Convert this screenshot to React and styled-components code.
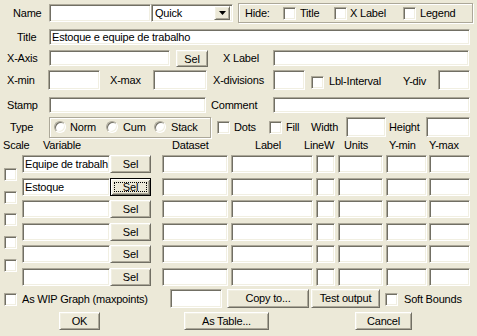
import React from 'react';
import styled, { createGlobalStyle, css } from 'styled-components';

const GlobalStyle = createGlobalStyle`
    html, body {
        margin: 0;
        padding: 0;
        background: #ece9d8;
    }
    body {
        font-family: "Liberation Sans", Arial, sans-serif;
        font-size: 11px;
        letter-spacing: -0.2px;
        color: #000;
    }
`;

const sunken = css`
    box-sizing: border-box;
    border: 1px solid;
    border-color: #aca899 #ffffff #ffffff #aca899;
    box-shadow: inset 1px 1px 0 #716f64, inset -1px -1px 0 #f1efe2;
    background: #fff;
`;

const raised = css`
    box-sizing: border-box;
    border: 1px solid;
    border-color: #ffffff #716f64 #716f64 #ffffff;
    box-shadow: inset 1px 1px 0 #f1efe2, inset -1px -1px 0 #aca899;
    background: #ece9d8;
`;

const Dialog = styled.div`
    width: 477px;
    height: 336px;
    display: flex;
    flex-direction: column;
    overflow: hidden;
`;

const Row = styled.div`
    display: flex;
    align-items: ${({ $align }) => $align || 'center'};
    height: ${({ $h }) => $h}px;
    margin-top: ${({ $mt }) => $mt}px;
    flex-shrink: 0;
`;

const Label = styled.span`
    flex-shrink: 0;
    width: ${({ $w }) => ($w ? `${$w}px` : 'auto')};
    margin-left: ${({ $ml }) => $ml || 0}px;
    white-space: nowrap;
    line-height: 12px;
    margin-top: ${({ $dy }) => $dy || 0}px;
`;

const TextBox = styled.div`
    ${sunken};
    flex-shrink: 0;
    width: ${({ $w }) => $w}px;
    height: ${({ $h }) => $h || 16}px;
    margin-left: ${({ $ml }) => $ml || 0}px;
    padding: 0 2px;
    display: flex;
    align-items: center;
    white-space: nowrap;
    overflow: hidden;
    line-height: 12px;
`;

const Button = styled.div`
    ${raised};
    position: relative;
    flex-shrink: 0;
    width: ${({ $w }) => $w}px;
    height: ${({ $h }) => $h || 18}px;
    margin-left: ${({ $ml }) => $ml || 0}px;
    display: flex;
    align-items: center;
    justify-content: center;
    line-height: 12px;
    ${({ $focused }) =>
        $focused &&
        css`
            border-color: #000;
            box-shadow: inset 1px 1px 0 #fff, inset -1px -1px 0 #716f64,
                inset 2px 2px 0 #f1efe2, inset -2px -2px 0 #aca899;
        `}
`;

const FocusRing = styled.span`
    position: absolute;
    top: 3px;
    left: 3px;
    right: 3px;
    bottom: 3px;
    border: 1px dotted #000;
`;

const Check = styled.div`
    ${sunken};
    flex-shrink: 0;
    width: 13px;
    height: 13px;
    margin-left: ${({ $ml }) => $ml || 0}px;
    margin-top: ${({ $dy }) => $dy || 0}px;
`;

const Radio = styled.div`
    ${sunken};
    flex-shrink: 0;
    width: 12px;
    height: 12px;
    border-radius: 50%;
    margin-left: ${({ $ml }) => $ml || 0}px;
`;

const Group = styled.div`
    box-sizing: border-box;
    flex-shrink: 0;
    display: flex;
    align-items: center;
    width: ${({ $w }) => $w}px;
    height: ${({ $h }) => $h}px;
    margin-left: ${({ $ml }) => $ml || 0}px;
    border: 1px solid #aca899;
    box-shadow: inset 1px 1px 0 #fff, 1px 1px 0 #fff;
`;

const Combo = styled.div`
    ${sunken};
    flex-shrink: 0;
    width: ${({ $w }) => $w}px;
    height: 18px;
    padding: 2px 2px 2px 3px;
    display: flex;
    align-items: center;
    justify-content: space-between;
`;

const DropButton = styled.div`
    ${raised};
    width: 16px;
    height: 14px;
    display: flex;
    align-items: center;
    justify-content: center;
`;

const Grid = styled.div`
    display: flex;
    margin-top: 4px;
    flex-shrink: 0;
`;

const ScaleColumn = styled.div`
    width: 22px;
    display: flex;
    flex-direction: column;
    gap: 9.7px;
    padding-top: 13px;
    box-sizing: border-box;
`;

const Rows = styled.div`
    display: flex;
    flex-direction: column;
    gap: 4.6px;
`;

const variables = ['Equipe de trabalh', 'Estoque', '', '', '', ''];

export default function App() {
    return (
        <>
            <GlobalStyle />
            <Dialog>
                <Row $h={20} $mt={3}>
                    <Label $ml={13} $w={36}>Name</Label>
                    <TextBox $w={102} $h={18} />
                    <Combo $w={82}>
                        <span>Quick</span>
                        <DropButton>
                            <svg width="7" height="4" viewBox="0 0 7 4">
                                <path d="M0 0h7L3.5 4z" fill="#000" />
                            </svg>
                        </DropButton>
                    </Combo>
                    <Group $w={235} $h={20} $ml={5}>
                        <Label $ml={6} $w={38}>Hide:</Label>
                        <Check />
                        <Label $ml={4} $w={34}>Title</Label>
                        <Check />
                        <Label $ml={3} $w={53}>X Label</Label>
                        <Check />
                        <Label $ml={4}>Legend</Label>
                    </Group>
                </Row>

                <Row $h={16} $mt={6}>
                    <Label $ml={17} $w={32}>Title</Label>
                    <TextBox $w={421}>Estoque e equipe de trabalho</TextBox>
                </Row>

                <Row $h={17} $mt={5} $align="flex-start">
                    <Label $ml={7} $w={42} $dy={2}>X-Axis</Label>
                    <TextBox $w={121} />
                    <Button $ml={6} $w={32} $h={17}>Sel</Button>
                    <Label $ml={15} $w={50} $dy={2}>X Label</Label>
                    <TextBox $w={196} />
                </Row>

                <Row $h={20} $mt={3}>
                    <Label $ml={7} $w={41}>X-min</Label>
                    <TextBox $w={52} $h={20} />
                    <Label $ml={10} $w={43}>X-max</Label>
                    <TextBox $w={54} $h={20} />
                    <Label $ml={6} $w={60}>X-divisions</Label>
                    <TextBox $w={32} $h={20} />
                    <Check $ml={6} $dy={5} />
                    <Label $ml={5} $w={74} $dy={2}>Lbl-Interval</Label>
                    <Label $w={35} $dy={2}>Y-div</Label>
                    <TextBox $w={32} $h={20} />
                </Row>

                <Row $h={16} $mt={7}>
                    <Label $ml={7} $w={42}>Stamp</Label>
                    <TextBox $w={157} />
                    <Label $ml={5} $w={62}>Comment</Label>
                    <TextBox $w={197} />
                </Row>

                <Row $h={20} $mt={4}>
                    <Label $ml={10} $w={39}>Type</Label>
                    <Group $w={162} $h={21}>
                        <Radio $ml={4} />
                        <Label $ml={4} $w={36}>Norm</Label>
                        <Radio />
                        <Label $ml={5} $w={31}>Cum</Label>
                        <Radio />
                        <Label $ml={5}>Stack</Label>
                    </Group>
                    <Check $ml={6} />
                    <Label $ml={4} $w={35}>Dots</Label>
                    <Check />
                    <Label $ml={4} $w={25}>Fill</Label>
                    <Label $w={35}>Width</Label>
                    <TextBox $w={40} $h={20} />
                    <Label $ml={3} $w={37}>Height</Label>
                    <TextBox $w={44} $h={20} />
                </Row>

                <Row $h={12} $mt={2}>
                    <Label $ml={3} $w={40}>Scale</Label>
                    <Label $w={129}>Variable</Label>
                    <Label $w={83}>Dataset</Label>
                    <Label $w={49}>Label</Label>
                    <Label $w={40}>LineW</Label>
                    <Label $w={45}>Units</Label>
                    <Label $w={40}>Y-min</Label>
                    <Label>Y-max</Label>
                </Row>

                <Grid>
                    <ScaleColumn>
                        {[0, 1, 2, 3, 4].map((i) => (
                            <Check key={i} $ml={4} />
                        ))}
                    </ScaleColumn>
                    <Rows>
                        {variables.map((name, i) => (
                            <Row key={i} $h={18} $mt={0}>
                                <TextBox $w={88} $h={18}>{name}</TextBox>
                                <Button $w={41} $h={18} $focused={i === 1}>
                                    Sel
                                    {i === 1 && <FocusRing />}
                                </Button>
                                <TextBox $ml={11} $w={66} $h={18} />
                                <TextBox $ml={3} $w={82} $h={18} />
                                <TextBox $ml={3} $w={19} $h={18} />
                                <TextBox $ml={3} $w={45} $h={18} />
                                <TextBox $ml={3} $w={41} $h={18} />
                                <TextBox $ml={2} $w={41} $h={18} />
                            </Row>
                        ))}
                    </Rows>
                </Grid>

                <Row $h={19} $mt={3}>
                    <Check $ml={4} $dy={3} />
                    <Label $ml={5} $w={148} $dy={2}>As WIP Graph (maxpoints)</Label>
                    <TextBox $w={52} $h={19} />
                    <Button $ml={5} $w={82} $h={19}>Copy to...</Button>
                    <Button $ml={2} $w={69} $h={19}>Test output</Button>
                    <Check $ml={5} $dy={3} />
                    <Label $ml={6} $dy={2}>Soft Bounds</Label>
                </Row>

                <Row $h={18} $mt={4}>
                    <Button $ml={59} $w={41}>OK</Button>
                    <Button $ml={84} $w={85}>As Table...</Button>
                    <Button $ml={86} $w={57}>Cancel</Button>
                </Row>
            </Dialog>
        </>
    );
}
